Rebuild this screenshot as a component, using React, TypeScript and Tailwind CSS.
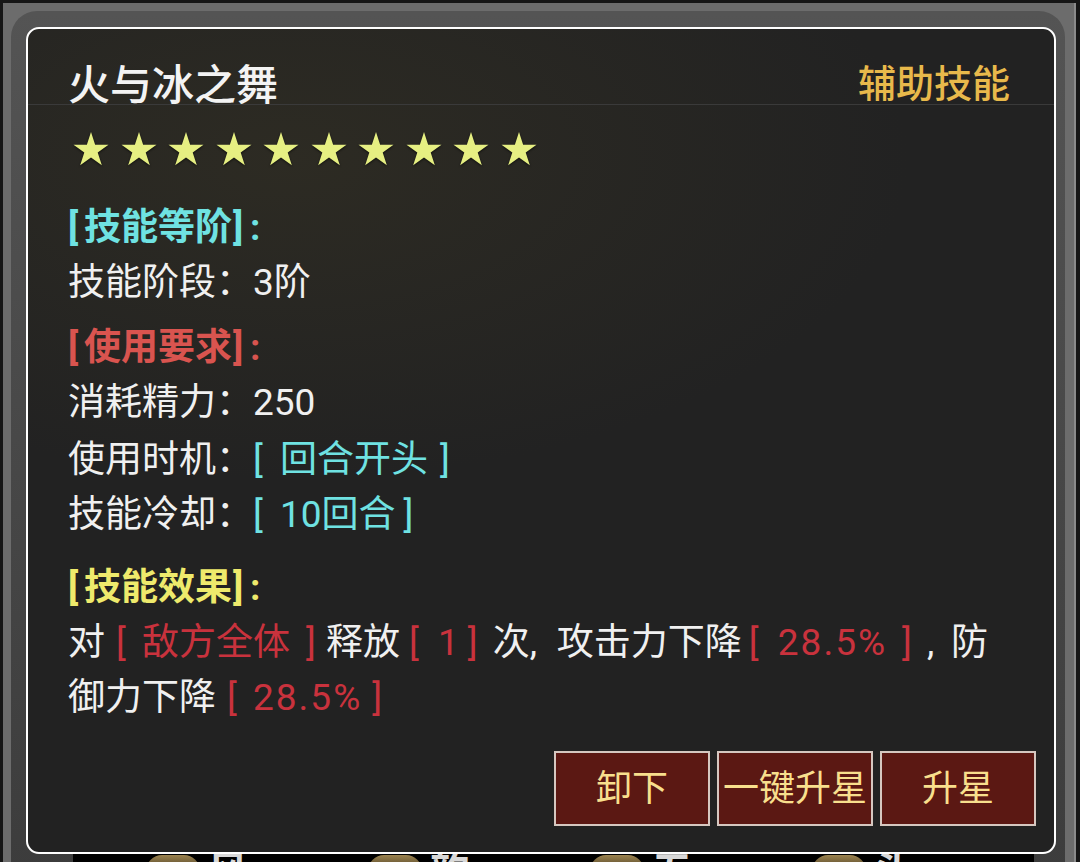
import React from 'react';

const STAR_POINTS =
  '18,0 22.13,12.71 35.5,12.71 24.69,20.57 28.82,33.29 18,25.43 7.18,33.29 11.31,20.57 0.5,12.71 13.87,12.71';

function Star() {
  return (
    <svg width="36" height="34" viewBox="0 0 36 34" className="drop-shadow-[0_1px_1px_rgba(0,0,0,0.6)]">
      <polygon points={STAR_POINTS} fill="#e6ef82" />
    </svg>
  );
}

function Line({ children, className = '' }: { children: React.ReactNode; className?: string }) {
  return <div className={`h-[55px] leading-[55px] whitespace-nowrap ${className}`}>{children}</div>;
}

// fixed-width slot, used for the wide-set brackets and commas of the game font
function Slot({ cls, children }: { cls: string; children: React.ReactNode }) {
  return <span className={`inline-block ${cls}`}>{children}</span>;
}

function Head({ text, color }: { text: string; color: string }) {
  return (
    <Line className={`font-bold ${color}`}>
      <Slot cls="w-[16px]">[</Slot>
      {text}
      <Slot cls="w-[18px] pl-[1px]">]</Slot>:
    </Line>
  );
}

function BottomItem({ glyph }: { glyph: string }) {
  return (
    <div className="flex items-start gap-[8px] w-[234px]">
      <div className="mt-[1px] w-[54px] h-[16px] rounded-t-[20px] bg-gradient-to-b from-[#9c8450] to-[#4a3c22]" />
      <div className="text-[40px] leading-[40px] -mt-[2px] text-[#d8d8d8] font-bold">{glyph}</div>
    </div>
  );
}

export default function App() {
  const buttons = ['卸下', '一键升星', '升星'];

  return (
    <div className="w-[1080px] h-[862px] overflow-hidden bg-[#161616] pt-[3px] pl-[3px] font-[family-name:Roboto,'Noto_Sans_CJK_SC',sans-serif]">
      <div className="w-[1073px] h-[900px] bg-[#6c6c6c] border-r-2 border-[#8a8a8a] pt-[8px] pl-[8px] pr-[9px]">
        <div className="h-[900px] rounded-[26px] bg-gradient-to-b from-[#545454] to-[#3b3b3b] pt-[16px] pl-[15px] pr-[9px]">
          {/* tooltip panel */}
          <div className="h-[827px] rounded-[13px] border-2 border-white bg-[radial-gradient(ellipse_620px_320px_at_260px_130px,#2d2b23,#222222)] flex flex-col">
            <div className="h-[76px] border-b border-[#3a3a3a] flex items-start justify-between pl-[40px] pr-[44px] pt-[36px]">
              <div className="text-[42px] leading-none font-medium text-[#f3f3f3]">火与冰之舞</div>
              <div className="text-[38px] leading-none font-medium text-[#e8b94b]">辅助技能</div>
            </div>

            <div className="flex gap-[11.5px] pl-[45px] mt-[27px]">
              {Array.from({ length: 10 }).map((_, i) => (
                <Star key={i} />
              ))}
            </div>

            <div className="px-[40px] mt-[34px] text-[37px] text-[#f0f0f0]">
              <Head text="技能等阶" color="text-[#6fe2e2]" />
              <Line>技能阶段：3阶</Line>

              <div className="mt-[10px]">
                <Head text="使用要求" color="text-[#d9544f]" />
              </div>
              <Line>消耗精力：250</Line>
              <Line className="mt-[2px]">
                使用时机：
                <span className="text-[#6fe2e2]">
                  <Slot cls="w-[27px]">[</Slot>回合开头<Slot cls="pl-[12px]">]</Slot>
                </span>
              </Line>
              <Line>
                技能冷却：
                <span className="text-[#6fe2e2]">
                  <Slot cls="w-[27px]">[</Slot>10回合<Slot cls="pl-[8px]">]</Slot>
                </span>
              </Line>

              <div className="mt-[18px]">
                <Head text="技能效果" color="text-[#eeea6c]" />
              </div>
              <Line>
                对
                <span className="text-[#c9323d]">
                  <Slot cls="w-[37px] pl-[11px]">[</Slot>敌方全体<Slot cls="w-[36px] pl-[16px]">]</Slot>
                </span>
                释放
                <span className="text-[#c9323d]">
                  <Slot cls="w-[38px] pl-[9px]">[</Slot>1<Slot cls="w-[34px] pl-[9px]">]</Slot>
                </span>
                次<Slot cls="w-[27px]">,</Slot>攻击力下降
                <span className="text-[#c9323d]">
                  <Slot cls="w-[36px] pl-[7px]">[</Slot>
                  <span className="tracking-[2px]">28.5%</span>
                  <Slot cls="w-[40px] pl-[15px]">]</Slot>
                </span>
                <Slot cls="w-[24px]">,</Slot>防
              </Line>
              <Line>
                御力下降
                <span className="text-[#c9323d]">
                  <Slot cls="w-[37px] pl-[11px]">[</Slot>
                  <span className="tracking-[2px]">28.5%</span>
                  <Slot cls="pl-[10px]">]</Slot>
                </span>
              </Line>
            </div>

            <div className="mt-auto flex justify-end gap-[7px] pr-[18px] pb-[26px]">
              {buttons.map((b) => (
                <button
                  key={b}
                  className="w-[156px] h-[75px] bg-[#5b1813] border-2 border-[#d6c7c0] text-[36px] leading-none text-[#f8df8d] flex items-center justify-center"
                >
                  {b}
                </button>
              ))}
            </div>
          </div>

          {/* list peeking below the panel */}
          <div className="ml-[47px] w-[961px] h-[40px] bg-black overflow-hidden flex pl-[73px]">
            <BottomItem glyph="风" />
            <BottomItem glyph="韵" />
            <BottomItem glyph="五" />
            <BottomItem glyph="头" />
          </div>
        </div>
      </div>
    </div>
  );
}
